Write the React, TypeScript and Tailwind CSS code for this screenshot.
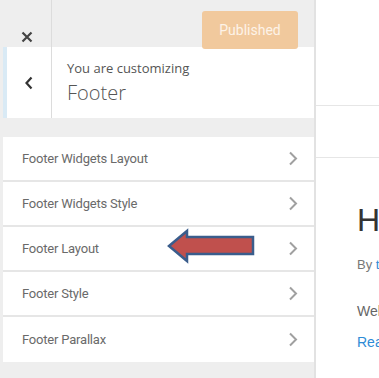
const items = [
  'Footer Widgets Layout',
  'Footer Widgets Style',
  'Footer Layout',
  'Footer Style',
  'Footer Parallax',
];

const Chevron = () => (
  <svg width="10" height="15" viewBox="0 0 10 15" fill="none">
    <path d="M2 1.5 L8 7.5 L2 13.5" stroke="#a0a0a0" strokeWidth="2" />
  </svg>
);

export default function App() {
  return (
    <div className="relative flex h-[378px] w-[379px] overflow-hidden bg-white">
      <aside className="flex w-[316px] shrink-0 flex-col border-r-2 border-[#e2e2e2] bg-[#eeeeee] pl-[3px]">
        <div className="relative z-10 flex h-[47px] shrink-0">
          <div className="flex w-[49px] items-end justify-center border-r border-[#dcdcdc] pb-[4px]">
            <svg width="12" height="12" viewBox="0 0 12 12">
              <path d="M1.5 1.5 L10.5 10.5 M10.5 1.5 L1.5 10.5" stroke="#444" strokeWidth="2.2" />
            </svg>
          </div>
          <button className="ml-auto mr-[16px] mt-[11px] h-[38px] w-[96px] rounded-[3px] bg-[#f1c99d] font-['Roboto',sans-serif] text-[14px] text-[#fdf3e8]">
            Published
          </button>
        </div>

        <div className="flex h-[71px] shrink-0 bg-white">
          <div className="w-[4px] bg-[#d9eaf5]" />
          <div className="flex w-[45px] items-center justify-center border-r border-[#dcdcdc]">
            <svg width="10" height="14" viewBox="0 0 10 14" fill="none">
              <path d="M7.5 1.5 L2.5 7 L7.5 12.5" stroke="#333" strokeWidth="2.2" />
            </svg>
          </div>
          <div className="flex flex-col justify-center pl-[15px] font-['Open_Sans',sans-serif] text-[#555]">
            <span className="text-[13px] leading-[18px]">You are customizing</span>
            <span className="mt-[3px] text-[20px] font-light leading-[26px]">Footer</span>
          </div>
        </div>

        <ul className="mt-[19px] flex flex-col">
          {items.map((label) => (
            <li
              key={label}
              className="flex h-[45px] items-center justify-between border-b-2 border-[#e6e6e6] bg-white pl-[19px] pr-[16px] font-['Roboto',sans-serif] text-[13px] tracking-[-0.2px] text-[#6a6a6a] last:border-b-0"
            >
              <span>{label}</span>
              <Chevron />
            </li>
          ))}
        </ul>
      </aside>

      <main className="min-w-0 flex-1 font-['Liberation_Sans',Arial,sans-serif]">
        <div className="h-[106px] border-b border-[#e6e6e6]" />
        <div className="h-[52px] border-b border-[#e6e6e6]" />
        <div className="pl-[41px] pt-[43px] whitespace-nowrap">
          <h1 className="text-[32px] leading-[38px] text-[#333]">Hello world!</h1>
          <p className="mt-[16px] text-[13px] text-[#777]">
            By <span className="text-[#2e8bd6]">themes</span>
          </p>
          <p className="mt-[26px] text-[14px] text-[#666]">Welcome to WordPress.</p>
          <p className="mt-[10px] text-[14px] text-[#2e8bd6]">Read more</p>
        </div>
      </main>

      <svg className="absolute left-[166px] top-[228px]" width="90" height="40" viewBox="0 0 90 40">
        <path
          d="M3 18 L21 3 L21 9 L87 9 L87 26 L21 26 L21 33 Z"
          fill="#c0504d"
          stroke="#3a5d8c"
          strokeWidth="2.5"
          strokeLinejoin="miter"
        />
      </svg>
    </div>
  );
}
